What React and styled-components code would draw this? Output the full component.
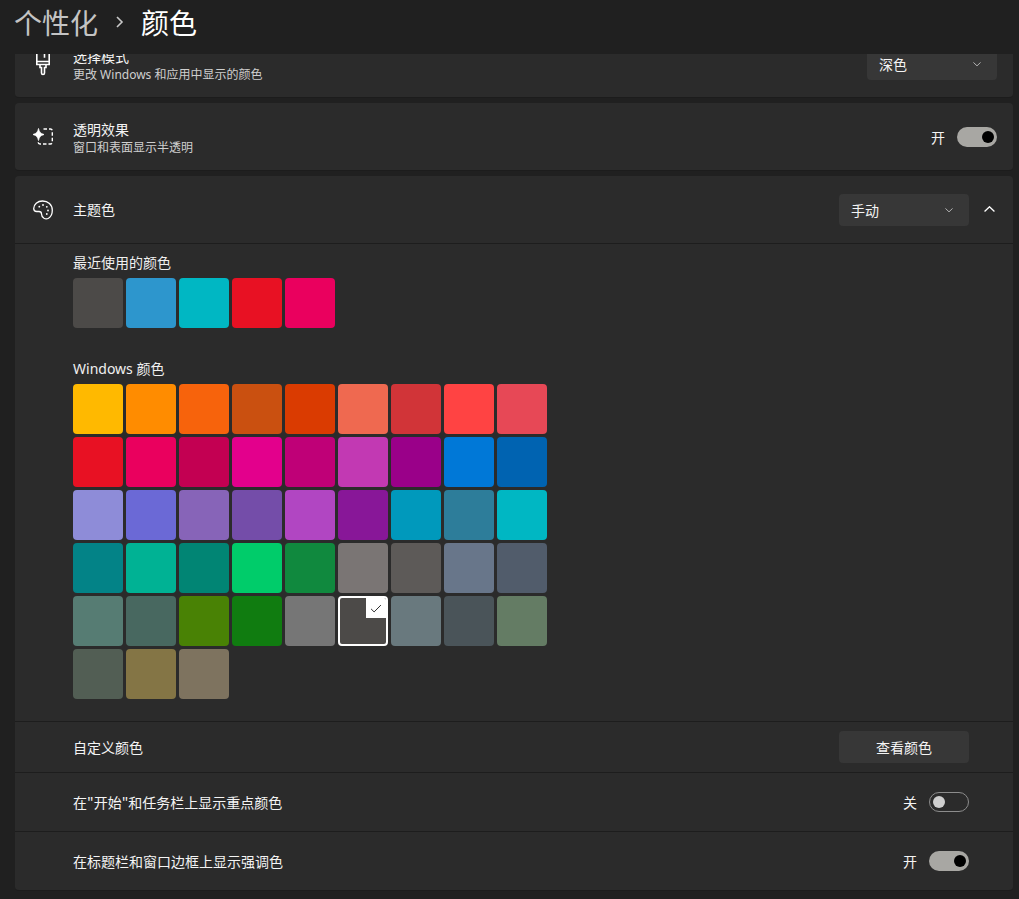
import React from "react";
import styled, { createGlobalStyle } from "styled-components";

const Global = createGlobalStyle`
  html, body { margin: 0; padding: 0; background: #202020; }
  body { font-family: "Noto Sans CJK SC", "Noto Sans", sans-serif; color: #fff; overflow: hidden; }
  * { box-sizing: border-box; }
`;

const Page = styled.div`
  width: 1019px;
  height: 899px;
  overflow: hidden;
  background: #202020;
  display: flex;
  flex-direction: column;
`;
const Header = styled.header`
  position: relative;
  z-index: 2;
  flex: none;
  height: 54px;
  background: #202020;
  display: flex;
  align-items: center;
  gap: 17px;
  padding: 0 0 10px 14px;
  font-size: 28px;
  line-height: 40px;
`;
const Crumb = styled.span`
  color: ${p => (p.$current ? "#fff" : "#c4c4c4")};
  font-weight: 400;
`;
const Content = styled.main`
  margin-top: -24px;
  padding: 0 6px 0 15px;
  display: flex;
  flex-direction: column;
  gap: 5px;
`;
const Card = styled.section`
  background: #2b2b2b;
  border-radius: 4px;
  border-bottom: 1px solid #1c1c1c;
  display: flex;
  flex-direction: column;
`;
const Row = styled.div`
  height: ${p => p.$h}px;
  display: flex;
  align-items: center;
  padding: 0 ${p => p.$right ?? 16}px 0 0;
  border-top: ${p => (p.$divider ? "1px solid #1d1d1d" : "none")};
`;
const IconSlot = styled.div`
  width: 56px;
  margin-right: 2px;
  flex: none;
  display: flex;
  justify-content: center;
`;
const Texts = styled.div`
  flex: 1;
  display: flex;
  flex-direction: column;
  padding: ${p => (p.$single ? "0 0 2px" : "3px 0 0")};
`;
const Title = styled.div`
  font-size: 14px;
  line-height: 18px;
  color: #f4f4f4;
`;
const Sub = styled.div`
  margin-top: 1px;
  font-size: 12px;
  line-height: 18px;
  color: #cfcfcf;
  font-family: "Noto Sans", "Noto Sans CJK SC", sans-serif;
`;
const Select = styled.div`
  width: 130px;
  height: 32px;
  background: #373737;
  border-radius: 4px;
  display: flex;
  align-items: center;
  justify-content: space-between;
  padding: 0 16px 0 12px;
  font-size: 14px;
  color: #f4f4f4;
  svg { margin-top: 2px; }
`;
const Button = styled.div`
  width: 130px;
  height: 32px;
  background: #373737;
  border-radius: 4px;
  display: flex;
  align-items: center;
  justify-content: center;
  padding-bottom: 1px;
  font-size: 14px;
  color: #f4f4f4;
`;
const ToggleWrap = styled.div`
  display: flex;
  align-items: center;
  gap: 12px;
  font-size: 14px;
  color: #f4f4f4;
`;
const Track = styled.div`
  width: 40px;
  height: 20px;
  border-radius: 10px;
  display: flex;
  align-items: center;
  justify-content: ${p => (p.$on ? "flex-end" : "flex-start")};
  padding: 0 3px;
  background: ${p => (p.$on ? "#a8a7a3" : "transparent")};
  border: ${p => (p.$on ? "none" : "1px solid #8c8c8c")};
`;
const Knob = styled.div`
  width: 12px;
  height: 12px;
  border-radius: 50%;
  background: ${p => (p.$on ? "#000" : "#cfcfcf")};
`;
const CollapseBtn = styled.div`
  width: 20px;
  margin-left: 10px;
  display: flex;
  justify-content: center;
`;
const Panel = styled.div`
  border-top: 1px solid #1d1d1d;
  padding: 10px 0 22px 58px;
  display: flex;
  flex-direction: column;
`;
const Label = styled.div`
  font-size: 14px;
  line-height: 18px;
  height: 24px;
  color: #f0f0f0;
  font-family: "Noto Sans", "Noto Sans CJK SC", sans-serif;
`;
const Swatches = styled.div`
  display: grid;
  grid-template-columns: repeat(9, 50px);
  grid-auto-rows: 50px;
  gap: 3px;
  margin-bottom: ${p => p.$mb || 0}px;
`;
const Swatch = styled.div`
  position: relative;
  border-radius: 4px;
  background: ${p => p.$c};
  overflow: hidden;
  ${p => p.$selected && "border: 2px solid #fff;"}
`;
const Check = styled.div`
  position: absolute;
  top: 0;
  right: 0;
  width: 20px;
  height: 20px;
  background: #fff;
  display: flex;
  align-items: center;
  justify-content: center;
`;
const FootTitle = styled(Title)`
  flex: 1;
  padding-left: 58px;
`;

const Chevron = ({ up, color = "#b8b8b8", w = 8 }) => (
  <svg width={w} height={w * 0.55} viewBox="0 0 10 5.500" fill="none" stroke={color} strokeWidth="1.200">
    <path d={up ? "M.5 5 5 .7 9.500 5" : "M.5.5 5 4.800 9.500.5"} />
  </svg>
);
const Brush = () => (
  <svg width="14" height="24" viewBox="0 0 14 24" fill="none" stroke="#fff" strokeWidth="1.600">
    <path d="M.8.8h12.400v11.700H.8zM.8 9.500h12.400M8.500.8v5M4 12.500v3h1.500V21a1.500 1.500 0 0 0 3 0v-5.500H10v-3" />
  </svg>
);
const Sparkle = () => (
  <svg width="20" height="17" viewBox="0 0 20 17" fill="none">
    <path d="M5.500.5C6.200 4 7.500 5.500 11 6.500 7.500 7.500 6.200 9 5.500 12.500 4.800 9 3.500 7.500 0 6.500 3.500 5.500 4.800 4 5.500.5Z" fill="#fff" stroke="#fff" strokeWidth=".8" />
    <path d="M10.500 1H17.500A1.800 1.800 0 0 1 19.300 2.800v11.400a1.800 1.800 0 0 1-1.800 1.800H7a1.800 1.800 0 0 1-1.800-1.800v-.7" stroke="#fff" strokeWidth="1.400" strokeDasharray="3.500 2" />
  </svg>
);
const Palette = () => (
  <svg width="20" height="20" viewBox="0 0 20 20" fill="none" stroke="#fff" strokeWidth="1.300">
    <path d="M9.500 1C4.500 1 .7 4.500.7 8.500c0 2 1.400 3 3 3h2.300c1.500 0 2.500 1 2.500 2.500 0 1.500.6 3 2.500 4.200 1.500.9 3 .8 4.500 0 2.500-1.500 3.800-4.500 3.800-8C19.300 4.500 15 1 9.500 1Z" />
    <g fill="#fff" stroke="none">
      <circle cx="6.300" cy="6.700" r=".9" /><circle cx="10" cy="5" r=".9" /><circle cx="13.800" cy="6.800" r=".9" /><circle cx="15" cy="10.500" r=".9" /><circle cx="13.800" cy="14" r=".9" />
    </g>
  </svg>
);
const Tick = () => (
  <svg width="12" height="9" viewBox="0 0 14 11" fill="none" stroke="#2b2b2b" strokeWidth="1.200">
    <path d="M1 6l3.700 3.700L13 1.300" />
  </svg>
);

const Toggle = ({ on }) => (
  <ToggleWrap>
    {on ? "开" : "关"}
    <Track $on={on}><Knob $on={on} /></Track>
  </ToggleWrap>
);

const recent = ["#4c4a48", "#2d96cd", "#00b7c3", "#e81123", "#ea005e"];
const windowsColors = [
  "#ffb900", "#ff8c00", "#f7630c", "#ca5010", "#da3b01", "#ef6950", "#d13438", "#ff4343", "#e74856",
  "#e81123", "#ea005e", "#c30052", "#e3008c", "#bf0077", "#c239b3", "#9a0089", "#0078d7", "#0063b1",
  "#8e8cd8", "#6b69d6", "#8764b8", "#744da9", "#b146c2", "#881798", "#0099bc", "#2d7d9a", "#00b7c3",
  "#038387", "#00b294", "#018574", "#00cc6a", "#10893e", "#7a7574", "#5d5a58", "#68768a", "#515c6b",
  "#567c73", "#486860", "#498205", "#107c10", "#767676", "#4c4a48", "#69797e", "#4a5459", "#647c64",
  "#525e54", "#847545", "#7e735f",
];

export default function App() {
  return (
    <Page>
      <Global />
      <Header>
        <Crumb>个性化</Crumb>
        <svg width="9" height="14" viewBox="0 0 9 14" fill="none" stroke="#c8c8c8" strokeWidth="1.600"><path d="M2 2l5 5-5 5" /></svg>
        <Crumb $current>颜色</Crumb>
      </Header>
      <Content>
        <Card>
          <Row $h={67}>
            <IconSlot><Brush /></IconSlot>
            <Texts>
              <Title>选择模式</Title>
              <Sub>更改 Windows 和应用中显示的颜色</Sub>
            </Texts>
            <Select>深色<Chevron /></Select>
          </Row>
        </Card>
        <Card>
          <Row $h={67}>
            <IconSlot><Sparkle /></IconSlot>
            <Texts>
              <Title>透明效果</Title>
              <Sub>窗口和表面显示半透明</Sub>
            </Texts>
            <Toggle on />
          </Row>
        </Card>
        <Card>
          <Row $h={67} $right={14}>
            <IconSlot><Palette /></IconSlot>
            <Texts $single><Title>主题色</Title></Texts>
            <Select>手动<Chevron /></Select>
            <CollapseBtn><Chevron up color="#fff" w={11} /></CollapseBtn>
          </Row>
          <Panel>
            <Label>最近使用的颜色</Label>
            <Swatches $mb={32}>
              {recent.map(c => <Swatch key={c} $c={c} />)}
            </Swatches>
            <Label>Windows 颜色</Label>
            <Swatches>
              {windowsColors.map((c, i) => (
                <Swatch key={c} $c={c} $selected={i === 41}>
                  {i === 41 && <Check><Tick /></Check>}
                </Swatch>
              ))}
            </Swatches>
          </Panel>
          <Row $h={51} $divider $right={44}>
            <FootTitle>自定义颜色</FootTitle>
            <Button>查看颜色</Button>
          </Row>
          <Row $h={59} $divider $right={44}>
            <FootTitle>在"开始"和任务栏上显示重点颜色</FootTitle>
            <Toggle />
          </Row>
          <Row $h={59} $divider $right={44}>
            <FootTitle>在标题栏和窗口边框上显示强调色</FootTitle>
            <Toggle on />
          </Row>
        </Card>
      </Content>
    </Page>
  );
}
